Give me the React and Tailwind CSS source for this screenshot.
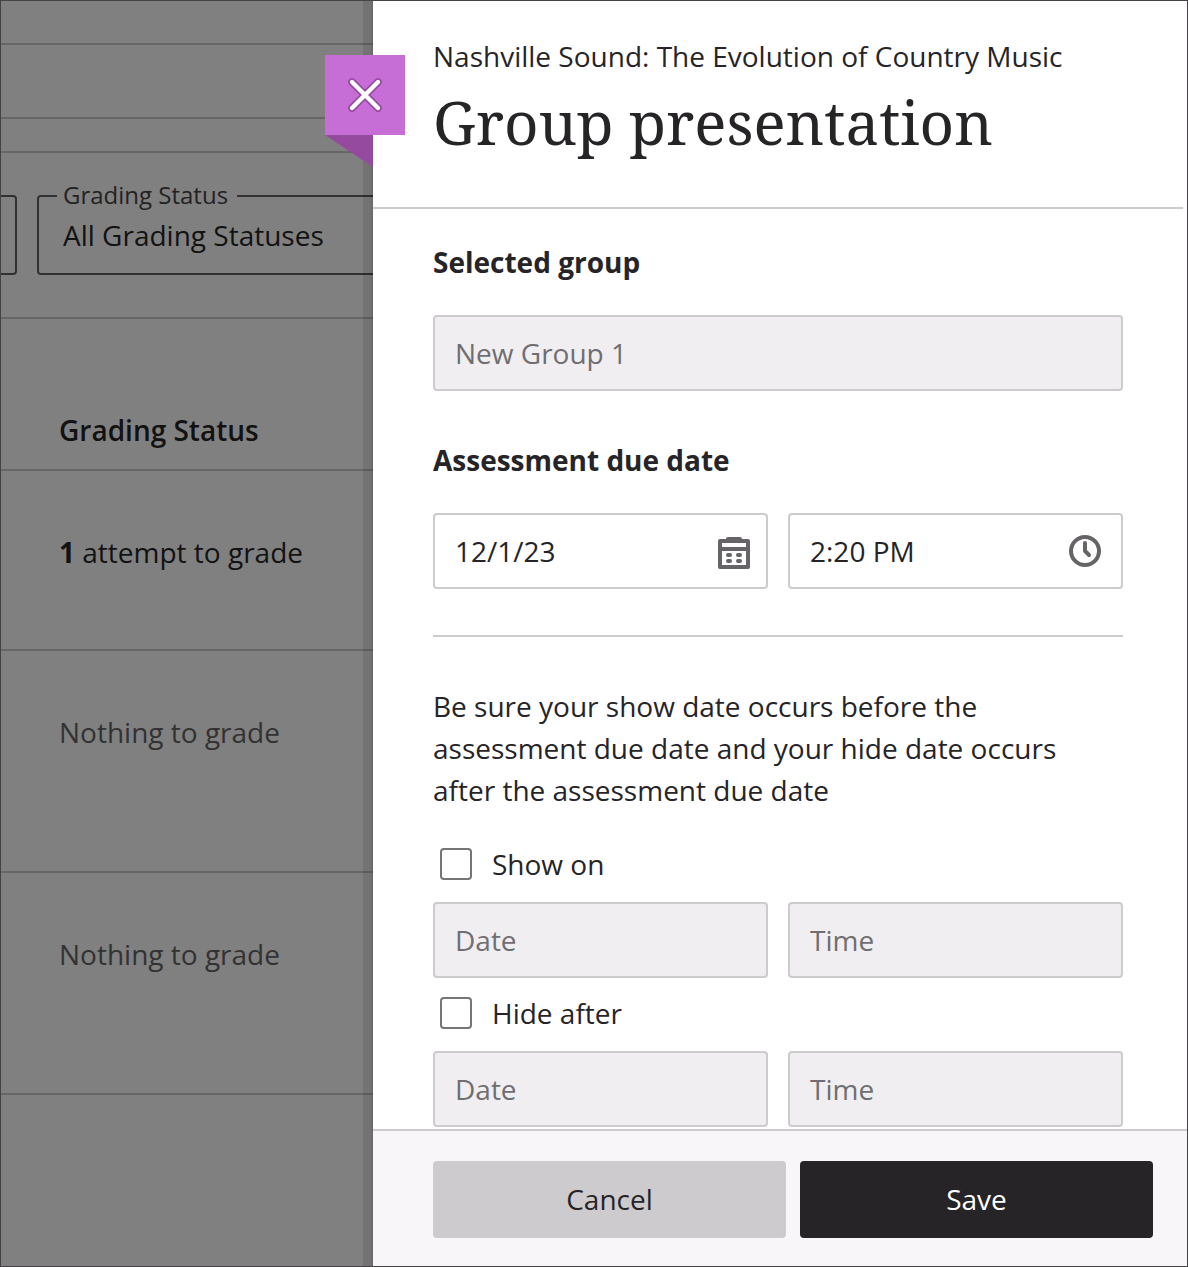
import { useState } from 'react';

const CloseIcon = () => (
  <svg className="w-8 h-8 overflow-visible" viewBox="0 0 32 32" fill="none">
    <path d="M3 3 29 29M29 3 3 29" stroke="#954a9f" strokeWidth="7.6" strokeLinecap="round" />
    <path d="M3 3 29 29M29 3 3 29" stroke="#ffffff" strokeWidth="4.4" strokeLinecap="round" />
  </svg>
);

const CalendarIcon = () => (
  <svg className="w-8 h-8 mt-1" viewBox="0 0 32 32" fill="#666466">
    <path
      fillRule="evenodd"
      d="M8 2Q8 0 10 0H22Q24 0 24 2H30Q32 2 32 4V30Q32 32 30 32H2Q0 32 0 30V4Q0 2 2 2ZM4 6V10H28V6ZM4 14V28H28V14Z"
    />
    <rect x="8" y="16" width="6" height="4" rx="2" />
    <rect x="18" y="16" width="6" height="4" rx="2" />
    <rect x="8" y="22" width="6" height="4" rx="2" />
    <rect x="18" y="22" width="6" height="4" rx="2" />
  </svg>
);

const ClockIcon = () => (
  <svg className="w-8 h-8 mr-1" viewBox="0 0 32 32" fill="none" stroke="#666466" strokeWidth="4">
    <circle cx="16" cy="16" r="14" />
    <path d="M16 8V16L20 20" strokeLinecap="round" strokeLinejoin="round" />
  </svg>
);

const Field = ({ value, icon, disabled }) => (
  <div
    className={`flex-1 h-[76px] flex items-center justify-between pl-5 pr-4 border-2 border-[#cdcbcd] rounded ${
      disabled ? 'bg-[#f0eef1] text-[#706e70]' : 'bg-white text-[#262427]'
    }`}
  >
    <span>{value}</span>
    {icon}
  </div>
);

const DateToggle = ({ label, className }) => {
  const [checked, setChecked] = useState(false);

  return (
    <div className={className}>
      <label className="flex items-center gap-5 pl-[7px]">
        <input
          type="checkbox"
          checked={checked}
          onChange={() => setChecked(!checked)}
          className="appearance-none w-8 h-8 border-2 border-[#777577] rounded bg-white checked:bg-[#262427]"
        />
        {label}
      </label>
      <div className="flex gap-5 mt-[17px]">
        <Field value="Date" disabled={!checked} />
        <Field value="Time" disabled={!checked} />
      </div>
    </div>
  );
};

const GradingList = () => (
  <div className="w-[372px] shrink-0 bg-[#808080] text-[#131213] overflow-hidden">
    <div className="h-11 border-b-2 border-[#676667]" />
    <div className="h-[74px] border-b-2 border-[#676667]" />
    <div className="h-[34px] border-b-2 border-[#676667]" />

    {/* Filters */}
    <div className="h-[166px] flex items-start border-b-2 border-[#676667]">
      <div className="w-4 h-20 mt-[42px] border-2 border-l-0 border-[#323132] rounded-r shrink-0" />
      <fieldset className="w-[360px] shrink-0 ml-5 mt-[27px] pl-[18px] pt-0.5 pb-[17px] border-2 border-[#323132] rounded">
        <legend className="pl-1.5 pr-[9px] pb-0.5 text-2xl leading-[30px] text-[#232223]">Grading Status</legend>
        <div className="pl-1.5">All Grading Statuses</div>
      </fieldset>
    </div>

    {/* Rows */}
    <div className="h-[152px] pl-[58px] pt-[90px] font-semibold border-b-2 border-[#676667]">Grading Status</div>
    <div className="h-[180px] pl-[58px] pt-[60px] border-b-2 border-[#676667]">
      <b>1</b> attempt to grade
    </div>
    <div className="h-[222px] pl-[58px] pt-[60px] text-[#333233] border-b-2 border-[#676667]">Nothing to grade</div>
    <div className="h-[222px] pl-[58px] pt-[60px] text-[#333233] border-b-2 border-[#676667]">Nothing to grade</div>
  </div>
);

const App = () => (
  <div className="relative w-[1188px] h-[1267px] flex border border-[#454345] overflow-hidden font-['Open_Sans',sans-serif] text-[28px] leading-[42px] text-[#262427]">
    <GradingList />

    {/* Panel edge shadow */}
    <div className="absolute left-[362px] top-0 w-2.5 h-full bg-linear-to-r from-black/10 from-70% to-black/20" />

    {/* Close tab */}
    <button className="absolute z-10 left-[324px] top-[54px] w-20 h-20 flex items-center justify-center bg-[#c76dd6]">
      <CloseIcon />
    </button>
    <svg className="absolute left-[324px] top-[134px] w-12 h-8" viewBox="0 0 48 32" preserveAspectRatio="none">
      <path d="M0 0H48V32Z" fill="#954a9f" />
    </svg>

    <main className="flex-1 flex flex-col bg-white">
      <header className="h-52 mr-1 pl-[60px] pt-[34px] border-b-2 border-[#cdcbcd]">
        <p>Nashville Sound: The Evolution of Country Music</p>
        <h1 className="mt-px text-6xl leading-[88px] whitespace-nowrap font-['Noto_Serif','Droid_Serif','DejaVu_Serif',serif]">
          Group presentation
        </h1>
      </header>

      <section className="h-[920px] pl-[60px] pt-8 pr-16">
        <h2 className="font-bold">Selected group</h2>
        <div className="flex mt-8">
          <Field value="New Group 1" disabled />
        </div>

        <h2 className="mt-12 font-bold">Assessment due date</h2>
        <div className="flex gap-5 mt-8">
          <Field value="12/1/23" icon={<CalendarIcon />} />
          <Field value="2:20 PM" icon={<ClockIcon />} />
        </div>

        <hr className="mt-[46px] border-t-2 border-[#cdcbcd]" />

        <p className="mt-12">
          Be sure your show date occurs before the<br />
          assessment due date and your hide date occurs<br />
          after the assessment due date
        </p>

        <DateToggle label="Show on" className="mt-8" />
        <DateToggle label="Hide after" className="mt-3.5" />
      </section>

      <footer className="flex-1 flex items-start gap-3.5 pl-[60px] pr-[34px] pt-[30px] bg-[#f8f6f9] border-t-2 border-[#cdcbcd]">
        <button className="flex-1 h-[77px] pb-0.5 rounded bg-[#cdcbcd]">Cancel</button>
        <button className="flex-1 h-[77px] pb-0.5 rounded bg-[#262427] text-white">Save</button>
      </footer>
    </main>
  </div>
);

export default App;
